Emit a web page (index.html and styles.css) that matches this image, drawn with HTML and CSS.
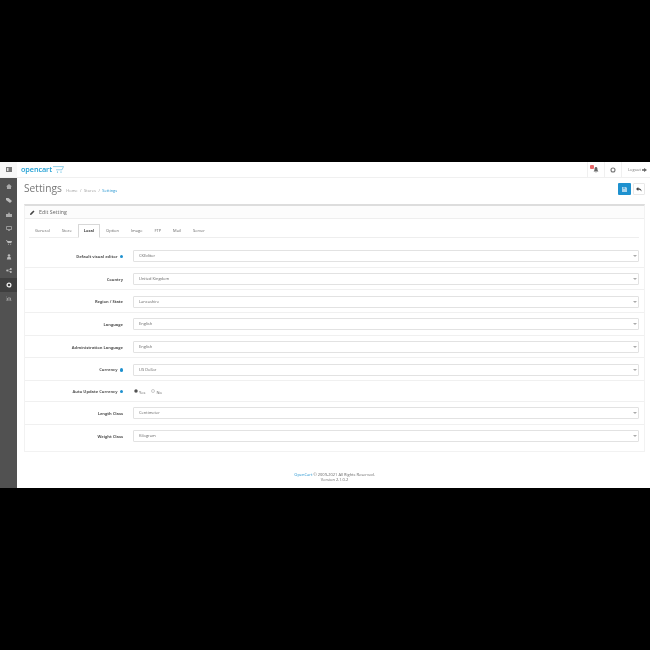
FILE: index.html
```html
<!DOCTYPE html>
<html lang="en">
<head>
<meta charset="utf-8">
<title>Settings</title>
<link rel="stylesheet" href="styles.css">
</head>
<body>
<div class="stage">
  <header class="topbar">
    <div class="burger"><svg width="6" height="5" viewBox="0 0 6 5"><rect width="6" height="5" fill="#777"/><rect x="1" y="1" width="1.500" height="3" fill="#ddd"/></svg></div>
    <div class="logo"><span class="logo-text">opencart</span><svg class="logo-cart" width="11" height="7" viewBox="0 0 11 7"><path d="M0 .6h10.500L9 3.800H3" fill="none" stroke="#4db2da" stroke-width=".6"/><circle cx="4.500" cy="6" r=".6" fill="#23a1d1"/><circle cx="8" cy="6" r=".6" fill="#23a1d1"/></svg></div>
    <div class="top-actions">
      <div class="top-item bell"><span class="badge"></span><svg width="6" height="6" viewBox="0 0 6 6"><path d="M3 0C1.500 0 1.500 1.500 1.500 3L.6 4.600h4.800L4.500 3C4.500 1.500 4.500 0 3 0ZM2.300 5a.8.800 0 0 0 1.400 0Z" fill="#666"/></svg></div>
      <div class="top-item"><svg width="6" height="6" viewBox="0 0 6 6"><circle cx="3" cy="3" r="2" fill="none" stroke="#777" stroke-width="1.100"/></svg></div>
      <div class="top-item logout"><span>Logout</span><svg width="5" height="4" viewBox="0 0 5 4"><path d="M0 1.300h2V0l3 2-3 2V2.700H0Z" fill="#666"/></svg></div>
    </div>
  </header>
  <div class="main">
    <nav class="sidebar">
      <div class="nav-item"><svg width="6" height="5" viewBox="0 0 6 5"><path d="M3 0 6 2.500H5V5H1V2.500H0Z" fill="#aaa"/></svg></div>
      <div class="nav-item"><svg width="6" height="5" viewBox="0 0 6 5"><path d="M0 0h2.500L6 3 4 5 0 2Z" fill="#bbb"/></svg></div>
      <div class="nav-item"><svg width="6" height="5" viewBox="0 0 6 5"><path d="M3 0 4 2H6V5H0V2H2Z" fill="#aaa"/></svg></div>
      <div class="nav-item"><svg width="6" height="5" viewBox="0 0 6 5"><path d="M.5.500h5v3h-5ZM2 4.600h2" fill="none" stroke="#aaa" stroke-width=".8"/></svg></div>
      <div class="nav-item"><svg width="6" height="5" viewBox="0 0 6 5"><path d="M0 0h1l.4 1H6L5.300 3H1.800ZM2 3.800h.8v1H2ZM4.300 3.800h.8v1h-.8Z" fill="#bbb"/></svg></div>
      <div class="nav-item"><svg width="6" height="6" viewBox="0 0 6 6"><circle cx="3" cy="1.500" r="1.300" fill="#bbb"/><path d="M.8 5.600 1.500 3h3l.7 2.600Z" fill="#bbb"/></svg></div>
      <div class="nav-item"><svg width="6" height="5" viewBox="0 0 6 5"><circle cx="1.200" cy="2.500" r="1" fill="#bbb"/><circle cx="4.800" cy="1" r="1" fill="#bbb"/><circle cx="4.800" cy="4" r="1" fill="#bbb"/><path d="M1.200 2.500 4.800 1M1.200 2.500 4.800 4" stroke="#bbb" stroke-width=".5"/></svg></div>
      <div class="nav-item active"><svg width="6" height="6" viewBox="0 0 6 6"><circle cx="3" cy="3" r="1.900" fill="none" stroke="#eee" stroke-width="1.300"/></svg></div>
      <div class="nav-item"><svg width="6" height="5" viewBox="0 0 6 5"><path d="M0 0v5h6" fill="none" stroke="#999" stroke-width=".6"/><path d="M1 2h1v2.500H1ZM2.500 1h1v3.500h-1ZM4 1.800h1v2.700H4Z" fill="#999"/></svg></div>
    </nav>
    <div class="content">
      <div class="page-header">
        <div class="title-group">
          <h1>Settings</h1>
          <ul class="crumbs"><li>Home</li><li>/</li><li>Stores</li><li>/</li><li class="current">Settings</li></ul>
        </div>
        <div class="buttons">
          <div class="btn btn-save"><svg width="5" height="5" viewBox="0 0 5 5"><path d="M0 0h4l1 1v4H0Z" fill="#a9d4ec"/><rect x="1" y="0.500" width="2" height="1.300" fill="#4fa8d9"/></svg></div>
          <div class="btn btn-back"><svg width="6" height="5" viewBox="0 0 6 5"><path d="M2.300 0v1.300C4.500 1.300 5.600 2.600 5.600 4.700 5 3.300 4 2.800 2.300 2.800V4L0 2Z" fill="#444"/></svg></div>
        </div>
      </div>
      <section class="panel">
        <div class="panel-heading"><svg width="5" height="5" viewBox="0 0 5 5"><path d="M0 5 .3 3.600 3.400.5 4.500 1.600 1.400 4.700Z" fill="#444"/></svg><span>Edit Setting</span></div>
        <div class="panel-body">
          <ul class="tabs">
            <li>General</li><li>Store</li><li class="active">Local</li><li>Option</li><li>Image</li><li>FTP</li><li>Mail</li><li>Server</li>
          </ul>
          <form class="form">
            <div class="row"><label>Default visual editor <i class="help"></i></label><div class="select">CKEditor</div></div>
            <div class="row"><label>Country</label><div class="select">United Kingdom</div></div>
            <div class="row"><label>Region / State</label><div class="select">Lancashire</div></div>
            <div class="row"><label>Language</label><div class="select">English</div></div>
            <div class="row"><label>Administration Language</label><div class="select">English</div></div>
            <div class="row"><label>Currency <i class="help"></i></label><div class="select">US Dollar</div></div>
            <div class="row row-short"><label>Auto Update Currency <i class="help"></i></label><div class="radios"><span class="radio checked"></span><span class="radio-text">Yes</span><span class="radio"></span><span class="radio-text">No</span></div></div>
            <div class="row"><label>Length Class</label><div class="select">Centimeter</div></div>
            <div class="row"><label>Weight Class</label><div class="select">Kilogram</div></div>
          </form>
        </div>
      </section>
      <footer class="footer"><p><span class="link">OpenCart</span> © 2009-2021 All Rights Reserved.</p><p>Version 2.1.0.2</p></footer>
    </div>
  </div>
</div>
</body>
</html>
```

FILE: styles.css
```css
* { box-sizing: border-box; }
html, body { margin: 0; padding: 0; background: #000; height: 650px; overflow: hidden; }
body { padding-top: 162px; font-family: "Open Sans", sans-serif; color: #666; }
.stage { width: 650px; height: 326px; background: #fff; display: flex; flex-direction: column; overflow: hidden; filter: blur(.3px); }
.topbar { height: 16px; flex: none; display: flex; align-items: center; border-bottom: 1px solid #f0f0f0; }
.burger { width: 17px; display: flex; justify-content: center; background: #f7f7f7; height: 100%; align-items: center; }
.logo { margin-left: 4px; display: flex; align-items: center; }
.logo-text { font: 600 7.300px/1 "Open Sans", sans-serif; color: #1f9fd4; letter-spacing: -.1px; }
.logo-cart { margin-left: 1px; }
.top-actions { margin-left: auto; display: flex; height: 100%; }
.top-item { display: flex; align-items: center; justify-content: center; gap: 1px; height: 100%; border-left: 1px solid #f0f0f0; width: 17px; position: relative; }
.logout { width: 29px; font-size: 4px; color: #777; justify-content: flex-start; padding-left: 6px; }
.badge { position: absolute; left: 2px; top: 3px; width: 4px; height: 4px; background: #e9686a; border-radius: 1px; }
.main { flex: 1; display: flex; min-height: 0; }
.sidebar { width: 17px; flex: none; background: #515151; padding-top: 1.500px; }
.nav-item { height: 14px; display: flex; align-items: center; justify-content: center; }
.nav-item.active { background: #3f3f3f; }
.content { flex: 1; min-width: 0; display: flex; flex-direction: column; padding: 0 5px 0 7px; }
.page-header { height: 26px; flex: none; display: flex; align-items: flex-start; justify-content: space-between; padding-top: 5px; }
.title-group { display: flex; align-items: baseline; gap: 4.500px; }
h1 { margin: 0; font-size: 10.200px; line-height: 1; font-weight: 400; color: #777; }
.crumbs { list-style: none; display: flex; gap: 2.500px; margin: 0; padding: 0; font-size: 4px; color: #999; }
.crumbs .current { color: #1e91cf; }
.buttons { display: flex; gap: 2px; }
.btn { width: 13px; height: 12px; display: flex; align-items: center; justify-content: center; border-radius: 1px; }
.btn-save { background: #1e91cf; }
.btn-back { background: #fff; border: 1px solid #e8e8e8; width: 12px; }
.panel { border: 1px solid #f2f2f2; border-top: 2px solid #ddd; flex: none; height: 248px; }
.panel-heading { height: 13px; background: #fcfcfc; border-bottom: 1px solid #eee; display: flex; align-items: center; gap: 4px; padding-left: 5px; font-size: 5.300px; color: #666; }
.panel-body { padding: 5px 0 0; }
.tabs { list-style: none; display: flex; margin: 0 5px 0 4px; padding: 0; height: 14px; border-bottom: 1px solid #eee; font-size: 4px; color: #666; }
.tabs li { padding: 0 6px; height: 14px; line-height: 13px; }
.tabs li.active { border: 1px solid #d8d8d8; border-bottom-color: #fff; padding: 0 5px; font-weight: 700; color: #444; line-height: 11px; }
.form { margin-top: 7px; }
.row { height: 22.700px; display: flex; align-items: center; border-bottom: 1px solid #f0f0f0; padding-right: 5px; padding-top: 1px; }
.row:last-child { border-bottom: 0; }
.row-short { height: 20.700px; }
.row label { width: 98px; flex: none; font-size: 4.050px; font-weight: 700; color: #555; text-align: right; display: flex; justify-content: flex-end; align-items: center; gap: 2px; }
.help { width: 3.500px; height: 3.500px; border-radius: 50%; background: #1e91cf; display: inline-block; }
.select { margin-left: 10px; flex: 1; height: 12px; border: 1px solid #e2e2e2; border-radius: 1px; font-size: 4px; line-height: 10px; padding-left: 5px; color: #666; position: relative; background: #fff; }
.select::after { content: ""; position: absolute; right: 1px; top: 4px; border: 2px solid transparent; border-top: 2px solid #aaa; border-bottom: 0; }
.radios { margin-left: 11px; display: flex; align-items: center; font-size: 4px; color: #666; }
.radio { width: 4px; height: 4px; border: 1px solid #ccc; border-radius: 50%; background: #fff; margin-right: 1px; }
.radio.checked { background: #333; border-color: #999; }
.radio-text { margin-right: 6px; padding-top: 1.500px; }
.footer { margin-top: 19.500px; text-align: center; font-size: 4px; color: #666; line-height: 5.500px; }
.footer p { margin: 0; }
.link { color: #1e91cf; }
```
